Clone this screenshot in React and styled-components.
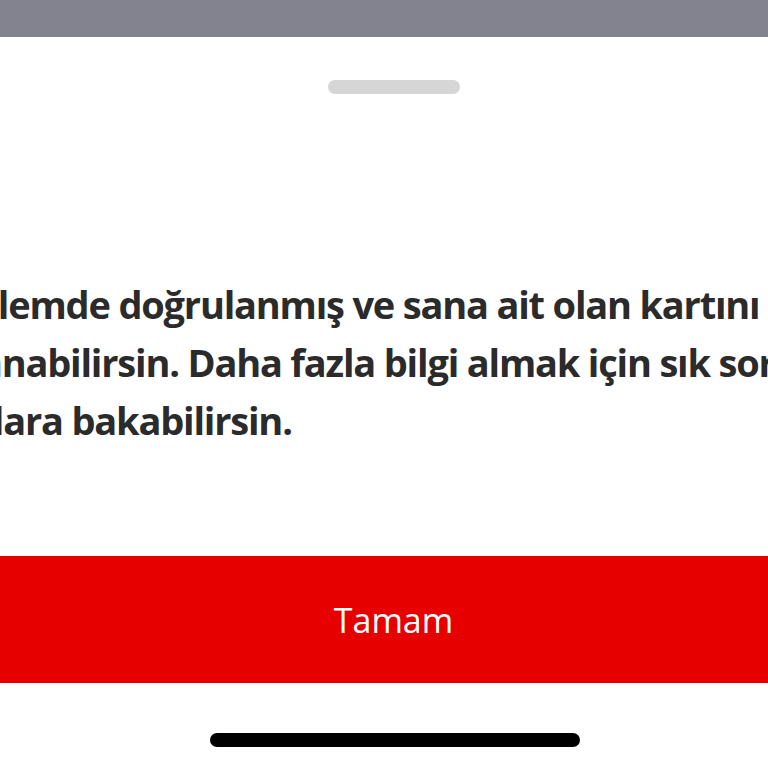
import React from "react";
import styled, { createGlobalStyle } from "styled-components";

const Global = createGlobalStyle`
  html, body { margin: 0; padding: 0; background: #ffffff; }
  body { font-family: "Open Sans", "Liberation Sans", sans-serif; }
  #root { width: 768px; height: 768px; overflow: hidden; }
`;

const Screen = styled.div`
  width: 768px;
  height: 768px;
  display: flex;
  flex-direction: column;
  background: #ffffff;
  overflow: hidden;
`;

const Backdrop = styled.div`
  height: 37px;
  flex: none;
  background: #82838f;
`;

const Sheet = styled.div`
  flex: 1;
  display: flex;
  flex-direction: column;
  background: #ffffff;
  overflow: hidden;
`;

const HandleRow = styled.div`
  display: flex;
  justify-content: center;
  padding: 43px 0 0 20px;
`;

const Handle = styled.div`
  width: 132px;
  height: 14px;
  border-radius: 7px;
  background: #d6d6d6;
`;

const Message = styled.p`
  margin: 181px 0 0 ${(p) => p.$offset}px;
  font-family: "Open Sans", "Liberation Sans", sans-serif;
  font-weight: 700;
  font-size: 38px;
  line-height: 58px;
  letter-spacing: -1.2px;
  color: #2b2b2b;
  white-space: nowrap;
`;

const Line = styled.span`
  display: block;
`;

const PrimaryButton = styled.button`
  margin-top: 107px;
  height: 127px;
  width: 100%;
  flex: none;
  border: none;
  border-radius: 0;
  background: #e60000;
  color: #ffffff;
  font-family: "Open Sans", "Liberation Sans", sans-serif;
  font-weight: 400;
  font-size: 34px;
  padding: 0 0 0 19px;
  display: flex;
  align-items: center;
  justify-content: center;
  cursor: pointer;
`;

const IndicatorRow = styled.div`
  display: flex;
  justify-content: center;
  padding: 50px 0 0 22px;
`;

const HomeIndicator = styled.div`
  width: 370px;
  height: 14px;
  border-radius: 7px;
  background: #000000;
`;

export default function App() {
  const lines = [
    "Bu işlemde doğrulanmış ve sana ait olan kartını",
    "kullanabilirsin. Daha fazla bilgi almak için sık sorulan",
    "sorulara bakabilirsin.",
  ];
  return (
    <>
      <Global />
      <Screen>
        <Backdrop />
        <Sheet>
          <HandleRow>
            <Handle />
          </HandleRow>
          <Message $offset={-87}>
            {lines.map((l) => (
              <Line key={l}>{l}</Line>
            ))}
          </Message>
          <PrimaryButton>Tamam</PrimaryButton>
          <IndicatorRow>
            <HomeIndicator />
          </IndicatorRow>
        </Sheet>
      </Screen>
    </>
  );
}
